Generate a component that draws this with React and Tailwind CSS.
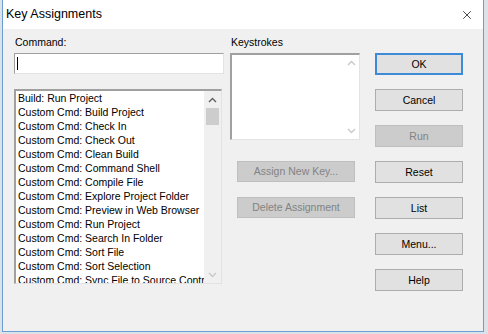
import { X } from "lucide-react";

const commands = [
  "Build: Run Project",
  "Custom Cmd: Build Project",
  "Custom Cmd: Check In",
  "Custom Cmd: Check Out",
  "Custom Cmd: Clean Build",
  "Custom Cmd: Command Shell",
  "Custom Cmd: Compile File",
  "Custom Cmd: Explore Project Folder",
  "Custom Cmd: Preview in Web Browser",
  "Custom Cmd: Run Project",
  "Custom Cmd: Search In Folder",
  "Custom Cmd: Sort File",
  "Custom Cmd: Sort Selection",
  "Custom Cmd: Sync File to Source Control",
];

const sideButtons = [
  { label: "OK", primary: true },
  { label: "Cancel" },
  { label: "Run", disabled: true },
  { label: "Reset" },
  { label: "List" },
  { label: "Menu..." },
  { label: "Help" },
];

const Chevron = ({ down, faded }) => (
  <svg width="9" height="6" viewBox="0 0 9 6" className="block">
    <path
      d={down ? "M1 1 L4.5 4.5 L8 1" : "M1 5 L4.5 1.5 L8 5"}
      fill="none"
      stroke={faded ? "#c8c8c8" : "#606060"}
      strokeWidth="1.4"
    />
  </svg>
);

const App = () => {
  return (
    <div
      className="w-[488px] h-[334px] bg-[#dde2e8] overflow-hidden"
      style={{ fontFamily: '"Liberation Sans", Arial, sans-serif' }}
    >
      <div className="ml-[2px] w-[482px] h-[332px] flex flex-col border-l border-r border-b border-[#6a9fd4] bg-[#f0f0f0]">
        {/* title bar */}
        <div className="h-[29px] bg-white flex items-center justify-between pl-[3px] pr-[9px] shrink-0">
          <span className="text-[12.5px] text-black">Key Assignments</span>
          <X size={14} strokeWidth={1.2} className="text-black" />
        </div>

        <div className="flex pt-[7px] pl-[11px] text-[10.5px] leading-[13px] text-black">
          {/* command column */}
          <div className="w-[210px] flex flex-col">
            <span className="pl-[1px]">Command:</span>
            <div className="mt-[4px] h-[21px] bg-white border border-[#a0a0a0] border-r-[#e3e3e3] border-b-[#e3e3e3] flex items-center pl-[2px]">
              <div className="w-px h-[13px] bg-black" />
            </div>
            <div className="mt-[15px] w-[208px] h-[195px] bg-white border-l-2 border-t-2 border-[#a0a0a0] border-r border-b border-r-[#e3e3e3] border-b-[#e3e3e3] flex overflow-hidden">
              <div className="flex-1 pl-[2px] overflow-hidden">
                {commands.map((c) => (
                  <div key={c} className="h-[14px] leading-[14px] whitespace-nowrap">
                    {c}
                  </div>
                ))}
              </div>
              <div className="w-[17px] bg-[#f0f0f0] flex flex-col items-center">
                <div className="h-[17px] flex items-center justify-center">
                  <Chevron />
                </div>
                <div className="w-[13px] h-[17px] bg-[#cdcdcd]" />
                <div className="flex-1" />
                <div className="h-[17px] flex items-center justify-center">
                  <Chevron down faded />
                </div>
              </div>
            </div>
          </div>

          {/* keystrokes column */}
          <div className="ml-[6px] w-[130px] flex flex-col">
            <span className="pl-[1px]">Keystrokes</span>
            <div className="mt-[4px] h-[87px] bg-white border-l-2 border-t-2 border-[#a0a0a0] border-r border-b border-r-[#e3e3e3] border-b-[#e3e3e3] flex justify-end">
              <div className="w-[16px] flex flex-col items-center justify-between py-[5px]">
                <Chevron faded />
                <Chevron down faded />
              </div>
            </div>
            <div className="mt-[21px] ml-[7px] w-[118px] flex flex-col gap-[15px]">
              {["Assign New Key...", "Delete Assignment"].map((b) => (
                <div
                  key={b}
                  className="h-[21px] bg-[#cccccc] border border-[#bfbfbf] text-[#838383] flex items-center justify-center"
                >
                  {b}
                </div>
              ))}
            </div>
          </div>

          {/* buttons column */}
          <div className="ml-[15px] mt-[17px] w-[88px] flex flex-col gap-[14px]">
            {sideButtons.map((b) => (
              <div
                key={b.label}
                className={
                  b.primary
                    ? "h-[22px] bg-[#e1e1e1] border-2 border-[#3d8bd6] flex items-center justify-center"
                    : b.disabled
                    ? "h-[22px] bg-[#cccccc] border border-[#bfbfbf] text-[#838383] flex items-center justify-center"
                    : "h-[22px] bg-[#e1e1e1] border border-[#adadad] flex items-center justify-center"
                }
              >
                {b.label}
              </div>
            ))}
          </div>
        </div>
      </div>
    </div>
  );
};

export default App;
